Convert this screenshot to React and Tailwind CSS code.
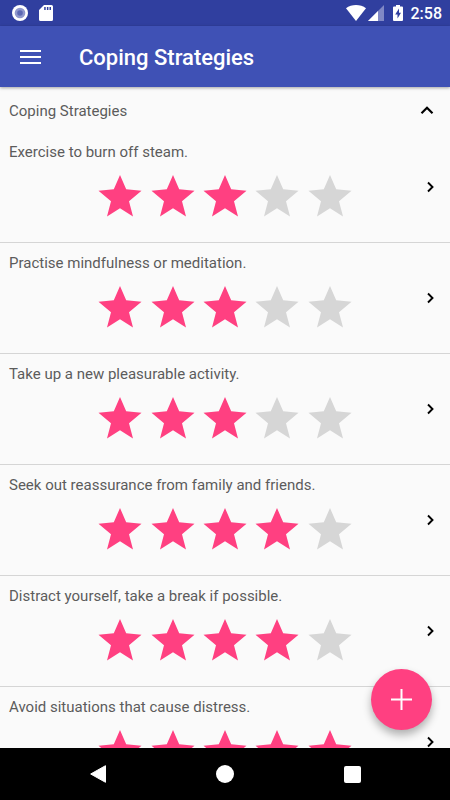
import { useState } from 'react';

// =============================================================================
// CONSTANTS
// =============================================================================

const MAX_RATING = 5;

const STRATEGIES = [
  { id: 1, title: 'Exercise to burn off steam.', rating: 3 },
  { id: 2, title: 'Practise mindfulness or meditation.', rating: 3 },
  { id: 3, title: 'Take up a new pleasurable activity.', rating: 3 },
  { id: 4, title: 'Seek out reassurance from family and friends.', rating: 4 },
  { id: 5, title: 'Distract yourself, take a break if possible.', rating: 4 },
  { id: 6, title: 'Avoid situations that cause distress.', rating: 5 },
];

// =============================================================================
// SUB-COMPONENTS
// =============================================================================

const StatusBar = () => (
  <div className="flex h-[26px] shrink-0 items-center justify-between bg-[#303f9f] pr-2 pl-3 text-white">
    <div className="flex items-center gap-[11px]">
      <svg width="16" height="16" viewBox="0 0 16 16" aria-hidden="true">
        <circle cx="8" cy="8" r="8" fill="#fff" />
        <circle cx="8" cy="8" r="5.3" fill="#9098cd" />
        <circle cx="8" cy="8" r="2.8" fill="#5c68b4" />
      </svg>
      <svg width="14" height="16" viewBox="0 0 14 16" aria-hidden="true">
        <path d="M5 0h7.500A1.500 1.500 0 0 1 14 1.500v13a1.500 1.500 0 0 1-1.500 1.500h-11A1.500 1.500 0 0 1 0 14.500V5z" fill="#fff" />
        <path d="M5.200 2h1.500v3H5.200zM7.900 2h1.500v3H7.900zM10.500 2h1.500v3h-1.500z" fill="#303f9f" />
      </svg>
    </div>
    <div className="flex items-center">
      <svg width="20" height="16" viewBox="0 0 20 16" aria-hidden="true">
        <path d="M0 3.200C5.500-1 14.500-1 20 3.200L10 16z" fill="#fff" />
      </svg>
      <svg className="ml-0.5" width="16" height="16" viewBox="0 0 16 16" aria-hidden="true">
        <path d="M16 0v16H0z" fill="#8088c5" />
        <path d="M10 6V16H0z" fill="#fff" />
      </svg>
      <svg className="ml-[9px]" width="10" height="16" viewBox="0 0 10 16" aria-hidden="true">
        <path d="M3 0h4v1.500h2a1 1 0 0 1 1 1V15a1 1 0 0 1-1 1H1a1 1 0 0 1-1-1V2.500a1 1 0 0 1 1-1h2z" fill="#fff" />
        <path d="M6 3.500L2.200 9.500h2.300v4L8 7.800H6z" fill="#303f9f" />
      </svg>
      <span className="ml-2 pt-0.5 text-[16px] leading-5 font-medium">2:58</span>
    </div>
  </div>
);

const AppBar = ({ title }) => (
  <header className="z-10 flex h-[61px] shrink-0 items-center bg-[#3f51b5] pl-5 text-white shadow-[0_1px_3px_rgba(0,0,0,0.35)]">
    <button type="button" aria-label="Open menu">
      <svg width="21" height="16" viewBox="0 0 21 16" aria-hidden="true">
        <path d="M0 2h21M0 8h21M0 14h21" stroke="#fff" strokeWidth="2" />
      </svg>
    </button>
    <h1 className="ml-[38px] pt-0.5 text-[22px] leading-7 font-medium">{title}</h1>
  </header>
);

const Star = ({ filled }) => (
  <svg width="44" height="42" viewBox="0 0 44 42" aria-hidden="true">
    <path
      d="M22 0L28.200 14.200L43.500 15.700L31 26.200L35 41.500L22 33.300L9 41.500L13 26.200L0.500 15.700L15.800 14.200Z"
      fill={filled ? '#ff4081' : '#d6d6d6'}
    />
  </svg>
);

/**
 * Read-only row of stars
 */
const Rating = ({ value }) => (
  <span
    role="img"
    aria-label={`${value} of ${MAX_RATING} stars`}
    className="mx-auto grid w-[262px] grid-cols-5 justify-items-center"
  >
    {Array.from({ length: MAX_RATING }, (_, i) => (
      <Star key={i} filled={i < value} />
    ))}
  </span>
);

const StrategyItem = ({ strategy }) => (
  <li className="border-b border-[#d5d5d5]">
    <button
      type="button"
      className="relative flex h-[110px] w-full flex-col justify-start gap-[13px] pt-2.5 text-left"
    >
      <span className="px-[9px] text-[15px] leading-5">{strategy.title}</span>
      <Rating value={strategy.rating} />
      <svg
        className="absolute top-1/2 right-4 -translate-y-1/2"
        width="7"
        height="12"
        viewBox="0 0 7 12"
        aria-hidden="true"
      >
        <path d="M1 1.500L5.500 6L1 10.500" fill="none" stroke="#000" strokeWidth="1.900" />
      </svg>
    </button>
  </li>
);

const NavigationBar = () => (
  <nav className="flex h-[52px] shrink-0 justify-center bg-black">
    <button type="button" aria-label="Back" className="flex w-[127px] items-center justify-center">
      <svg width="16" height="18" viewBox="0 0 16 18" aria-hidden="true">
        <path d="M15.500 0.700v16.600L0.700 9z" fill="#fff" stroke="#fff" strokeLinejoin="round" />
      </svg>
    </button>
    <button type="button" aria-label="Home" className="flex w-[127px] items-center justify-center">
      <span className="size-[18px] rounded-full bg-white" />
    </button>
    <button type="button" aria-label="Recent apps" className="flex w-[127px] items-center justify-center">
      <span className="size-[17px] rounded-xs bg-white" />
    </button>
  </nav>
);

// =============================================================================
// MAIN COMPONENT
// =============================================================================

const App = () => {
  const [isExpanded, setIsExpanded] = useState(true);

  return (
    <div className="flex h-screen flex-col overflow-hidden bg-[#fafafa] font-[Roboto,sans-serif] text-[#5c5c5c]">
      <StatusBar />
      <AppBar title="Coping Strategies" />

      <main className="relative min-h-0 flex-1">
        <div className="h-full overflow-hidden">
          <button
            type="button"
            aria-expanded={isExpanded}
            onClick={() => setIsExpanded(!isExpanded)}
            className="flex h-[45px] w-full items-center justify-between pt-0.5 pr-4 pl-[9px] text-left"
          >
            <span className="text-[15px] leading-5">Coping Strategies</span>
            <svg
              className={isExpanded ? '' : 'rotate-180'}
              width="14"
              height="9"
              viewBox="0 0 14 9"
              aria-hidden="true"
            >
              <path d="M1.500 7.300L7 1.800L12.500 7.300" fill="none" stroke="#000" strokeWidth="2.200" />
            </svg>
          </button>

          {isExpanded && (
            <ul>
              {STRATEGIES.map((strategy) => (
                <StrategyItem key={strategy.id} strategy={strategy} />
              ))}
            </ul>
          )}
        </div>

        {/* Add strategy */}
        <button
          type="button"
          aria-label="Add strategy"
          className="absolute right-[18px] bottom-[18px] flex size-[61px] items-center justify-center rounded-full bg-[#ff4081] shadow-[0_5px_9px_rgba(0,0,0,0.3)]"
        >
          <svg width="21" height="21" viewBox="0 0 21 21" aria-hidden="true">
            <path d="M10.500 0v21M0 10.500h21" stroke="#fff" strokeWidth="2" />
          </svg>
        </button>
      </main>

      <NavigationBar />
    </div>
  );
};

export default App;
